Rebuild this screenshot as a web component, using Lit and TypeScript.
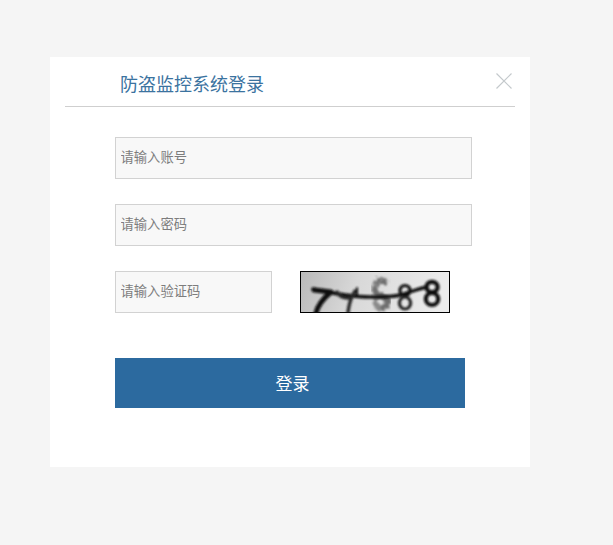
import { LitElement, html, css, svg } from "lit";
import { customElement } from "lit/decorators.js";

@customElement("app-root")
export class AppRoot extends LitElement {
  static styles = css`
    :host {
      display: block;
      box-sizing: border-box;
      height: 545px;
      padding: 57px 0 0 50px;
      background: #f5f5f5;
      font-family: "Noto Sans CJK SC", "Liberation Sans", sans-serif;
    }
    .card {
      box-sizing: border-box;
      width: 480px;
      height: 410px;
      background: #fff;
      padding: 0 15px;
    }
    .head {
      box-sizing: border-box;
      height: 50px;
      border-bottom: 1px solid #cfcfcf;
      display: flex;
      align-items: center;
      justify-content: space-between;
      padding: 3px 3px 0 55px;
    }
    .title {
      font-size: 18px;
      font-weight: 400;
      color: #3b739f;
      line-height: 24px;
    }
    .close {
      display: block;
      width: 16px;
      height: 16px;
      margin-bottom: 5px;
      padding: 0;
      border: 0;
      background: none;
    }
    .close svg { display: block; }
    form {
      display: flex;
      flex-direction: column;
      padding: 30px 0 0 50px;
    }
    input {
      box-sizing: border-box;
      display: block;
      width: 357px;
      height: 42px;
      margin: 0 0 25px;
      padding: 0 5px 4px 4.5px;
      border: 1px solid #d2d2d2;
      background: #f8f8f8;
      font: 13.3px "Noto Sans CJK SC", "Liberation Sans", sans-serif;
      color: #555;
      outline: none;
    }
    input::placeholder { color: #7d7d7d; opacity: 1; }
    .code-row {
      display: flex;
      align-items: flex-start;
      gap: 28px;
      height: 42px;
    }
    .code-row input { width: 157px; margin: 0; }
    .captcha {
      display: block;
      box-sizing: border-box;
      width: 150px;
      height: 42px;
      border: 1px solid #000;
    }
    .submit {
      display: block;
      width: 350px;
      height: 50px;
      margin-top: 45px;
      padding: 0 0 2px 5px;
      border: 0;
      background: #2c6a9f;
      color: #fff;
      font: 17px "Noto Sans CJK SC", "Liberation Sans", sans-serif;
      text-align: center;
    }
  `;

  private captcha() {
    return svg`
      <svg class="captcha" viewBox="0 0 148 40" xmlns="http://www.w3.org/2000/svg">
        <defs>
          <linearGradient id="bg" x1="0" y1="0" x2="1" y2="0.1">
            <stop offset="0" stop-color="#b9b9b9"/>
            <stop offset="0.4" stop-color="#d8d8d8"/>
            <stop offset="1" stop-color="#ececec"/>
          </linearGradient>
          <filter id="soft" x="-10%" y="-10%" width="120%" height="120%">
            <feGaussianBlur stdDeviation="0.8"/>
          </filter>
          <filter id="noisy" x="-20%" y="-20%" width="140%" height="140%">
            <feTurbulence type="fractalNoise" baseFrequency="0.35" numOctaves="3" seed="7" result="n"/>
            <feDisplacementMap in="SourceGraphic" in2="n" scale="8"/>
            <feGaussianBlur stdDeviation="1.1"/>
          </filter>
        </defs>
        <rect width="148" height="40" fill="url(#bg)"/>
        <g filter="url(#noisy)" fill="none" stroke="#6e6e6e">
          <path d="M86 11 C 78 6 72 12 74 19 C 75 24 85 23 87 29 C 88 35 80 38 75 34" stroke-width="6"/>
          <path d="M75 24 C 73 30 75 35 80 36" stroke="#8a8a8a" stroke-width="5"/>
        </g>
        <g filter="url(#soft)" fill="none" stroke="#0c0c0c" stroke-linecap="round">
          <path d="M13 18 L 30 20 C 24 25 17 32 15 41" stroke-width="5" stroke-linejoin="round"/>
          <path d="M12 17 C 30 21 50 25 69 25 C 80 25 92 25 99 23 C 107 21 116 17 126 15" stroke-width="3.4"/>
          <path d="M36 20 C 38 24 42 26 47 26 M54 19 C 50 25 48 32 47 40" stroke="#262626" stroke-width="3.4"/>
          <path d="M56 16 L 56 25" stroke-width="2"/>
          <ellipse cx="104" cy="18.5" rx="5" ry="5" stroke-width="3.2"/>
          <ellipse cx="104" cy="31" rx="5.6" ry="6" stroke="#222" stroke-width="3.2"/>
          <ellipse cx="131" cy="15" rx="5.6" ry="5.2" stroke-width="4.2"/>
          <ellipse cx="131" cy="27" rx="6.2" ry="6" stroke-width="4.2"/>
        </g>
      </svg>
    `;
  }

  render() {
    return html`
      <div class="card">
        <div class="head">
          <div class="title">防盗监控系统登录</div>
          <button class="close" type="button" aria-label="关闭">
            <svg width="16" height="16" viewBox="0 0 16 16">
              <path d="M0.5 0.5 L15.5 15.5 M15.5 0.5 L0.5 15.5" stroke="#c4c9cc" stroke-width="1.2" fill="none"/>
            </svg>
          </button>
        </div>
        <form @submit=${(e: Event) => e.preventDefault()}>
          <input type="text" placeholder="请输入账号" />
          <input type="password" placeholder="请输入密码" />
          <div class="code-row">
            <input type="text" placeholder="请输入验证码" />
            ${this.captcha()}
          </div>
          <button class="submit" type="submit">登录</button>
        </form>
      </div>
    `;
  }
}
